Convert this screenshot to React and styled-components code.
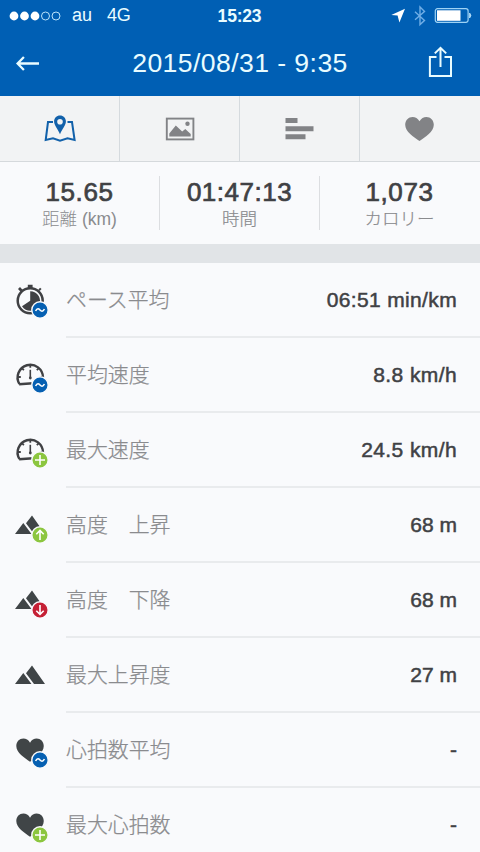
import React from "react";
import styled, { createGlobalStyle } from "styled-components";

const Global = createGlobalStyle`
  * { box-sizing: border-box; }
  body { margin: 0; background: #f9fafc; overflow: hidden; }
`;

const Screen = styled.main`
  width: 480px;
  height: 852px;
  overflow: hidden;
  background: #f9fafc;
  font-family: "Liberation Sans", "Noto Sans CJK JP", sans-serif;
  color: #404144;
`;

const StatusBar = styled.div`
  display: grid;
  grid-template-columns: 1fr auto 1fr;
  align-items: center;
  height: 31px;
  padding: 0 8px 0 9px;
  background: #005fb4;
  color: #e9fcff;
`;

const Carrier = styled.div`
  display: flex;
  align-items: center;
  font-size: 18px;
  line-height: 31px;
`;

const CarrierText = styled.span`
  margin-left: ${(p) => p.$gap}px;
  letter-spacing: ${(p) => p.$track || 0}px;
`;

const Clock = styled.div`
  padding: 1px 2px 0 0;
  font-size: 17.5px;
  font-weight: bold;
  line-height: 30px;
  letter-spacing: -0.2px;
`;

const StatusIcons = styled.div`
  display: flex;
  justify-content: flex-end;
  align-items: center;
`;

const NavBar = styled.header`
  display: grid;
  grid-template-columns: 60px 1fr 60px;
  align-items: center;
  height: 65px;
  background: #005fb4;
  color: #e9fcff;
`;

const NavButton = styled.button`
  display: flex;
  justify-content: ${(p) => (p.$end ? "flex-end" : "flex-start")};
  align-items: center;
  height: 65px;
  padding: ${(p) => (p.$end ? "0 27px 4px 0" : "0 0 0 15px")};
  border: 0;
  background: none;
  color: inherit;
`;

const Title = styled.h1`
  margin: 0;
  font-size: 26.6px;
  font-weight: normal;
  line-height: 65px;
  letter-spacing: 0.42px;
  text-align: center;
  white-space: nowrap;
`;

const Tabs = styled.nav`
  display: grid;
  grid-template-columns: repeat(4, 1fr);
  height: 66px;
  border-bottom: 1px solid #d5d9dc;
  background: #f2f3f4;
`;

const Tab = styled.button`
  display: flex;
  align-items: center;
  justify-content: center;
  padding: 0;
  border: 0;
  border-right: 1px solid ${(p) => (p.$last ? "transparent" : "#d5dade")};
  background: none;
  color: ${(p) => (p.$active ? "#1261aa" : "#828386")};
`;

const Stats = styled.section`
  display: grid;
  grid-template-columns: repeat(3, 1fr);
  height: 82px;
  padding: 14px 0;
`;

const Stat = styled.div`
  display: flex;
  flex-direction: column;
  align-items: center;
  border-right: 1px solid ${(p) => (p.$last ? "transparent" : "#dcdee1")};
`;

const StatValue = styled.div`
  font-size: 26px;
  line-height: 33px;
  letter-spacing: ${(p) => p.$track}px;
  -webkit-text-stroke: 0.7px currentColor;
`;

const StatLabel = styled.div`
  font-size: 17.5px;
  font-weight: 300;
  line-height: 20px;
  color: #8a8b8e;
  -webkit-text-stroke: ${(p) => (p.$thin ? 0 : 0.2)}px currentColor;
`;

const Band = styled.div`
  height: 19px;
  background: #e1e4e7;
`;

const List = styled.ul`
  margin: 0;
  padding: 0;
  list-style: none;
`;

const Row = styled.li`
  display: grid;
  grid-template-columns: 66px 1fr;
  height: 75px;
`;

const RowIcon = styled.div`
  display: flex;
  align-items: center;
  height: 76px;
  padding-left: 14px;
`;

const RowBody = styled.div`
  display: flex;
  justify-content: space-between;
  align-items: center;
  height: 75px;
  padding-right: 23px;
  border-bottom: 2px solid #e9ebed;
`;

const RowLabel = styled.span`
  padding-bottom: 3px;
  font-family: "Noto Sans CJK JP", sans-serif;
  font-size: 20.9px;
  font-weight: 300;
  line-height: 30px;
  color: #8a8b8e;
  white-space: pre;
  -webkit-text-stroke: 0.25px currentColor;
`;

const RowValue = styled.span`
  font-size: 21px;
  line-height: 30px;
  letter-spacing: ${(p) => p.$track || 0}px;
  -webkit-text-stroke: 0.5px currentColor;
`;

const SignalDots = () => (
  <svg width="52" height="12" viewBox="0 0 52 12">
    {[5, 15.5, 26].map((x) => (
      <circle key={x} cx={x} cy="6" r="4.4" fill="#fff" />
    ))}
    {[36.5, 47].map((x) => (
      <circle key={x} cx={x} cy="6" r="4" fill="none" stroke="#b9e2fa" strokeWidth="1" />
    ))}
  </svg>
);

const StatusGlyphs = () => (
  <svg width="84" height="24" viewBox="0 0 84 24">
    <path d="M17 4.8 L3.3 11 L9.6 11.6 L11.4 18.5 Z" fill="#fff" />
    <path d="M27 7.8 L36.5 16.4 L32 20.6 V3 L36.5 7.4 L27 15.8" fill="none" stroke="#70aee6" strokeWidth="1.4" />
    <rect x="47.3" y="4.7" width="32.8" height="13.6" rx="2.2" fill="none" stroke="#9ed3f5" strokeWidth="1.2" />
    <rect x="49" y="6.3" width="23.5" height="10.5" fill="#fff" />
    <path d="M81.6 9 Q84.1 11.5 81.6 14 Z" fill="#b9e2fa" stroke="#b9e2fa" strokeWidth=".8" />
  </svg>
);

const BackIcon = () => (
  <svg width="26" height="20" viewBox="0 0 26 20" fill="none" stroke="currentColor" strokeWidth="2.3">
    <path d="M24 9.5 H3 M8.9 3 L2.6 9.5 L8.9 16" />
  </svg>
);

const ShareIcon = () => (
  <svg width="28" height="34" viewBox="0 0 28 34" fill="none" stroke="currentColor" strokeWidth="2">
    <path d="M11.5 12 H4.9 V31.1 H26 V12 H19.5" />
    <path d="M15.5 22 V3 M9.8 8.4 L15.5 2.8 L21.2 8.4" />
  </svg>
);

const MapIcon = () => (
  <svg width="34" height="28" viewBox="0 0 34 28">
    <path d="M10 7 H5 L2.7 25 L10 23.2 L17 25.6 L24.5 23.2 L31.6 25 L29 7 H24.5" fill="none" stroke="currentColor" strokeWidth="2" />
    <path fillRule="evenodd" d="M17 .5 C13.6 .5 11.1 3 11.1 6.6 C11.1 10.3 14.7 13.8 17 19.3 C19.3 13.8 22.9 10.3 22.9 6.6 C22.9 3 20.4 .5 17 .5 Z M17 3.9 A2.8 2.8 0 1 1 17 9.5 A2.8 2.8 0 1 1 17 3.9 Z" fill="currentColor" />
  </svg>
);

const PhotoIcon = () => (
  <svg width="30" height="24" viewBox="0 0 30 24">
    <rect x="1.8" y="1.6" width="26.6" height="20.8" fill="none" stroke="currentColor" strokeWidth="1.9" />
    <circle cx="22.5" cy="6.7" r="2.2" fill="currentColor" />
    <path d="M4.3 19.5 V16.5 L10.8 8.4 L17.2 14.6 L20.3 12 L25.7 17 V19.5 Z" fill="currentColor" />
  </svg>
);

const BarsIcon = () => (
  <svg width="29" height="22" viewBox="0 0 29 22" fill="currentColor">
    <path d="M.5 0 H12.5 V5 H.5 Z M.5 8.3 H28.5 V13.2 H.5 Z M.5 16.3 H20.5 V21.3 H.5 Z" />
  </svg>
);

const heart = "M14.3 4.3 C12.8 1.5 10 0 7.4 0 C3.3 0 0 3.3 0 7.8 C0 14.8 8.6 20.3 14.3 24 C20 20.3 28.6 14.8 28.6 7.8 C28.6 3.3 25.3 0 21.2 0 C18.6 0 15.8 1.5 14.3 4.3 Z";

const HeartIcon = () => (
  <svg width="29" height="24" viewBox="0 0 28.6 24">
    <path d={heart} fill="currentColor" />
  </svg>
);

const stopwatch = (
  <g>
    <circle cx="16.2" cy="18.7" r="12.5" fill="none" stroke="#404144" strokeWidth="2.5" />
    <path d="M16.2 18.7 V9.2 A9.8 9.8 0 1 1 8 24.2 Z" fill="#404144" />
    <path d="M13.8 2.8 H18.6 V6 H13.8 Z M4 6.9 L6 5 L8.8 8 L6.8 10 Z" fill="#404144" />
    <path d="M25 8.3 L26.8 6.3" stroke="#404144" strokeWidth="2" />
  </g>
);

const gauge = (
  <g stroke="#404144" fill="none">
    <path d="M5.4 27 A12.7 12.7 0 1 1 29 20.5 M5.1 27.2 L19 26.2" strokeWidth="2.4" />
    <path d="M16.3 12.8 V21" strokeWidth="1.6" />
    <circle cx="16.3" cy="21" r="1.4" fill="#404144" stroke="none" />
    <path d="M16.3 7.5 V10.8 M7.8 11.1 L9.9 13.1 M24.9 11.1 L22.8 13.1 M4 20 H6.8 M28.5 20 H25.8" strokeWidth="1.8" />
  </g>
);

const mountains = (
  <path d="M1 27 L9.3 16 L17.5 27 Z M18 8.4 L31 27 H20 L12 16.3 Z" fill="#404547" />
);

const heartShape = <path d={heart} transform="translate(2.3 6.6) scale(.96)" fill="#404547" />;

const shapes = { stopwatch, gauge, mountains, heart: heartShape };

const badges = {
  average: { fill: "#0660b2", path: "M21.6 29 C23.2 25.8 24.8 26.7 26 28 C27.2 29.3 28.8 30.2 30.4 27" },
  plus: { fill: "#8cc63f", path: "M26 23 V33 M21 28 H31" },
  up: { fill: "#8cc63f", path: "M26 32.9 V23.5 M22.3 27.2 L26 23.5 L29.7 27.2" },
  down: { fill: "#c52035", path: "M26 23 V32.4 M22.3 28.7 L26 32.4 L29.7 28.7" },
};

const MetricIcon = ({ shape, badge }) => (
  <svg width="36" height="38" viewBox="0 0 36 38">
    {shapes[shape]}
    {badge && (
      <g>
        <circle cx="26" cy="28" r="8.2" fill={badges[badge].fill} stroke="#f9fafc" strokeWidth="1.4" />
        <path d={badges[badge].path} fill="none" stroke="#fff" strokeWidth="1.6" />
      </g>
    )}
  </svg>
);

const stats = [
  { value: "15.65", label: "距離 (km)", track: 0.6 },
  { value: "01:47:13", label: "時間", track: 0.5 },
  { value: "1,073", label: "カロリー", track: 0.6 },
];

const metrics = [
  { shape: "stopwatch", badge: "average", label: "ペース平均", value: "06:51 min/km", track: 0.35 },
  { shape: "gauge", badge: "average", label: "平均速度", value: "8.8 km/h", track: 0.4 },
  { shape: "gauge", badge: "plus", label: "最大速度", value: "24.5 km/h", track: 0.4 },
  { shape: "mountains", badge: "up", label: "高度　上昇", value: "68 m" },
  { shape: "mountains", badge: "down", label: "高度　下降", value: "68 m" },
  { shape: "mountains", label: "最大上昇度", value: "27 m" },
  { shape: "heart", badge: "average", label: "心拍数平均", value: "-" },
  { shape: "heart", badge: "plus", label: "最大心拍数", value: "-" },
];

export default function App() {
  return (
    <Screen>
      <Global />
      <StatusBar>
        <Carrier>
          <SignalDots />
          <CarrierText $gap={11}>au</CarrierText>
          <CarrierText $gap={15} $track={-0.2}>4G</CarrierText>
        </Carrier>
        <Clock>15:23</Clock>
        <StatusIcons>
          <StatusGlyphs />
        </StatusIcons>
      </StatusBar>
      <NavBar>
        <NavButton aria-label="Back">
          <BackIcon />
        </NavButton>
        <Title>2015/08/31 - 9:35</Title>
        <NavButton $end aria-label="Share">
          <ShareIcon />
        </NavButton>
      </NavBar>
      <Tabs>
        <Tab $active aria-label="Map"><MapIcon /></Tab>
        <Tab aria-label="Photos"><PhotoIcon /></Tab>
        <Tab aria-label="Splits"><BarsIcon /></Tab>
        <Tab $last aria-label="Heart rate"><HeartIcon /></Tab>
      </Tabs>
      <Stats>
        {stats.map((s, i) => (
          <Stat key={s.label} $last={i === stats.length - 1}>
            <StatValue $track={s.track}>{s.value}</StatValue>
            <StatLabel $thin={i === 0}>{s.label}</StatLabel>
          </Stat>
        ))}
      </Stats>
      <Band />
      <List>
        {metrics.map((m) => (
          <Row key={m.label}>
            <RowIcon>
              <MetricIcon shape={m.shape} badge={m.badge} />
            </RowIcon>
            <RowBody>
              <RowLabel>{m.label}</RowLabel>
              <RowValue $track={m.track}>{m.value}</RowValue>
            </RowBody>
          </Row>
        ))}
      </List>
    </Screen>
  );
}
